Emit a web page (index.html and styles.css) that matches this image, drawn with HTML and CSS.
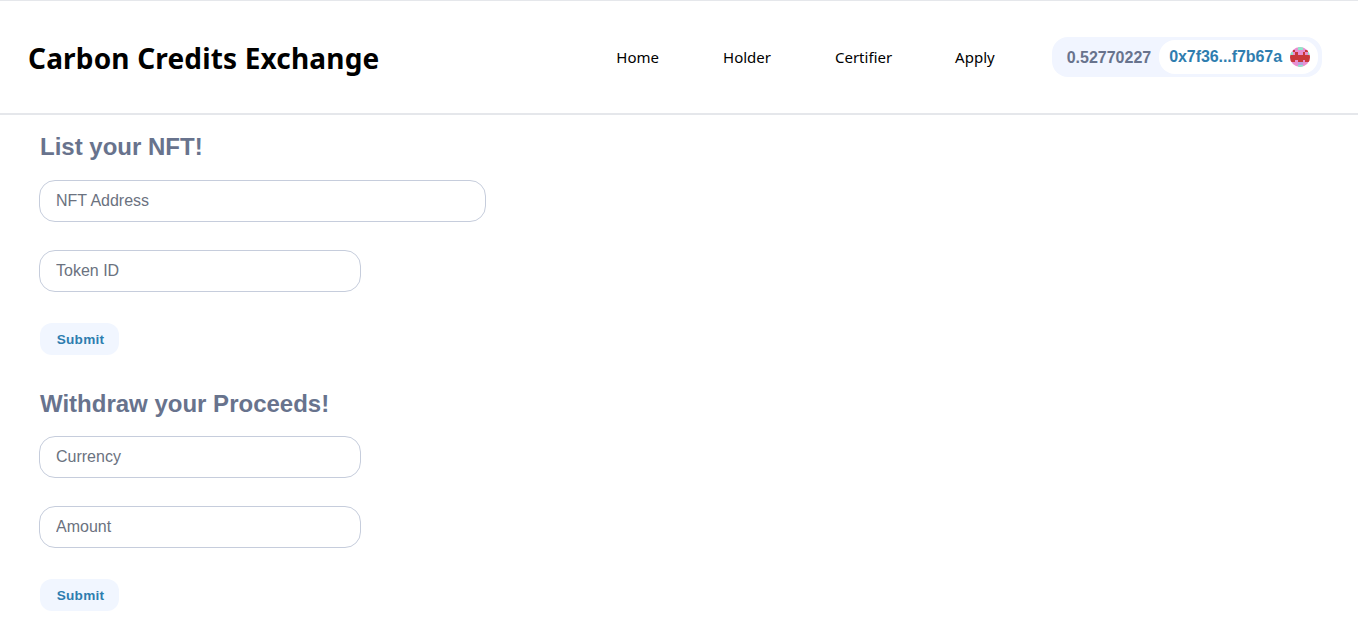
FILE: index.html
```html
<!DOCTYPE html>
<html lang="en">
<head>
    <meta charset="UTF-8">
    <meta name="viewport" content="width=device-width, initial-scale=1.0">
    <title>Carbon Credits Exchange</title>
    <link rel="stylesheet" href="styles.css">
</head>
<body>
    <nav class="topbar">
        <h1 class="brand">Carbon Credits Exchange</h1>
        <div class="nav-right">
            <a class="nav-link" href="#">Home</a>
            <a class="nav-link" href="#">Holder</a>
            <a class="nav-link nav-certifier" href="#">Certifier</a>
            <a class="nav-link nav-apply" href="#">Apply</a>
            <div class="wallet">
                <span class="balance">0.52770227</span>
                <div class="account">
                    <span class="address">0x7f36...f7b67a</span>
                    <svg class="avatar" viewBox="0 0 8 8" width="20" height="20" shape-rendering="crispEdges">
                        <rect width="8" height="8" fill="#e88fd0"/>
                        <rect x="3" y="0" width="2" height="1" fill="#8fe8c8"/>
                        <rect x="1" y="1" width="1" height="1" fill="#c8383a"/>
                        <rect x="6" y="1" width="1" height="1" fill="#c8383a"/>
                        <rect x="0" y="2" width="1" height="1" fill="#8fe8c8"/>
                        <rect x="7" y="2" width="1" height="1" fill="#8fe8c8"/>
                        <rect x="2" y="2" width="1" height="1" fill="#c8383a"/>
                        <rect x="5" y="2" width="1" height="1" fill="#c8383a"/>
                        <rect x="0" y="3" width="8" height="2" fill="#c8383a"/>
                        <rect x="0" y="5" width="2" height="1" fill="#c8383a"/>
                        <rect x="3" y="5" width="2" height="1" fill="#c8383a"/>
                        <rect x="6" y="5" width="2" height="1" fill="#c8383a"/>
                        <rect x="3" y="6" width="2" height="1" fill="#b9a0e0"/>
                        <rect x="3" y="7" width="2" height="1" fill="#8fe8c8"/>
                    </svg>
                </div>
            </div>
        </div>
    </nav>

    <main class="forms">
        <form class="panel">
            <h2 class="panel-title">List your NFT!</h2>
            <input class="textbox textbox-wide" type="text" placeholder="NFT Address">
            <input class="textbox" type="text" placeholder="Token ID">
            <button class="submit-btn" type="button">Submit</button>
        </form>
        <form class="panel">
            <h2 class="panel-title">Withdraw your Proceeds!</h2>
            <input class="textbox" type="text" placeholder="Currency">
            <input class="textbox" type="text" placeholder="Amount">
            <button class="submit-btn" type="button">Submit</button>
        </form>
    </main>
</body>
</html>
```

FILE: styles.css
```css
* {
    box-sizing: border-box;
}

body {
    margin: 0;
    background-color: #ffffff;
    font-family: "Liberation Sans", Arial, sans-serif;
}

.topbar {
    display: flex;
    justify-content: space-between;
    align-items: center;
    height: 115px;
    padding: 0 36px 0 28px;
    border-top: 1px solid #e5e7eb;
    border-bottom: 2px solid #e5e7eb;
}

.brand {
    margin: 2px 0 0;
    color: #000000;
    font-family: "Noto Sans", sans-serif;
    font-size: 28px;
    font-weight: 700;
    letter-spacing: 0.17px;
}

.nav-right {
    display: flex;
    align-items: center;
}

.nav-link {
    margin-right: 64px;
    color: #000000;
    font-family: "Noto Sans", sans-serif;
    font-size: 15px;
    text-decoration: none;
}

.nav-certifier {
    margin-right: 63px;
}

.nav-apply {
    margin-right: 57px;
}

.wallet {
    display: flex;
    align-items: center;
    height: 40px;
    padding: 3px 4px 3px 15px;
    border-radius: 16px;
    background-color: #f1f5ff;
}

.balance {
    margin: 2px 8px 0 0;
    color: #68738d;
    font-size: 16px;
    font-weight: 700;
}

.account {
    display: flex;
    align-items: center;
    gap: 8px;
    height: 34px;
    padding: 0 8px 0 10px;
    border-radius: 16px;
    background-color: #ffffff;
}

.address {
    color: #2e7daf;
    font-size: 16px;
    font-weight: 700;
    letter-spacing: -0.07px;
}

.avatar {
    border-radius: 50%;
}

.forms {
    padding: 0 39px;
}

.panel {
    display: flex;
    flex-direction: column;
    align-items: flex-start;
}

.panel-title {
    margin: 17px 0 18px 1px;
    color: #68738d;
    font-size: 24px;
    line-height: 30px;
    font-weight: 700;
}

.panel + .panel .panel-title {
    margin: 34px 0 17px 1px;
}

.textbox {
    width: 322px;
    height: 42px;
    margin-bottom: 28px;
    padding: 0 16px;
    border: 1px solid #c6cddc;
    border-radius: 16px;
    color: #68738d;
    font-family: "Liberation Sans", Arial, sans-serif;
    font-size: 16px;
}

.textbox::placeholder {
    color: #6b7280;
    opacity: 1;
}

.textbox-wide {
    width: 447px;
}

.submit-btn {
    width: 79px;
    height: 32px;
    margin: 3px 0 0 1px;
    padding: 0 0 0 2px;
    border: none;
    border-radius: 12px;
    background-color: #f1f6ff;
    color: #2e7daf;
    font-family: "Liberation Sans", Arial, sans-serif;
    font-size: 13.6px;
    font-weight: 700;
    letter-spacing: 0.25px;
    cursor: pointer;
}
```
